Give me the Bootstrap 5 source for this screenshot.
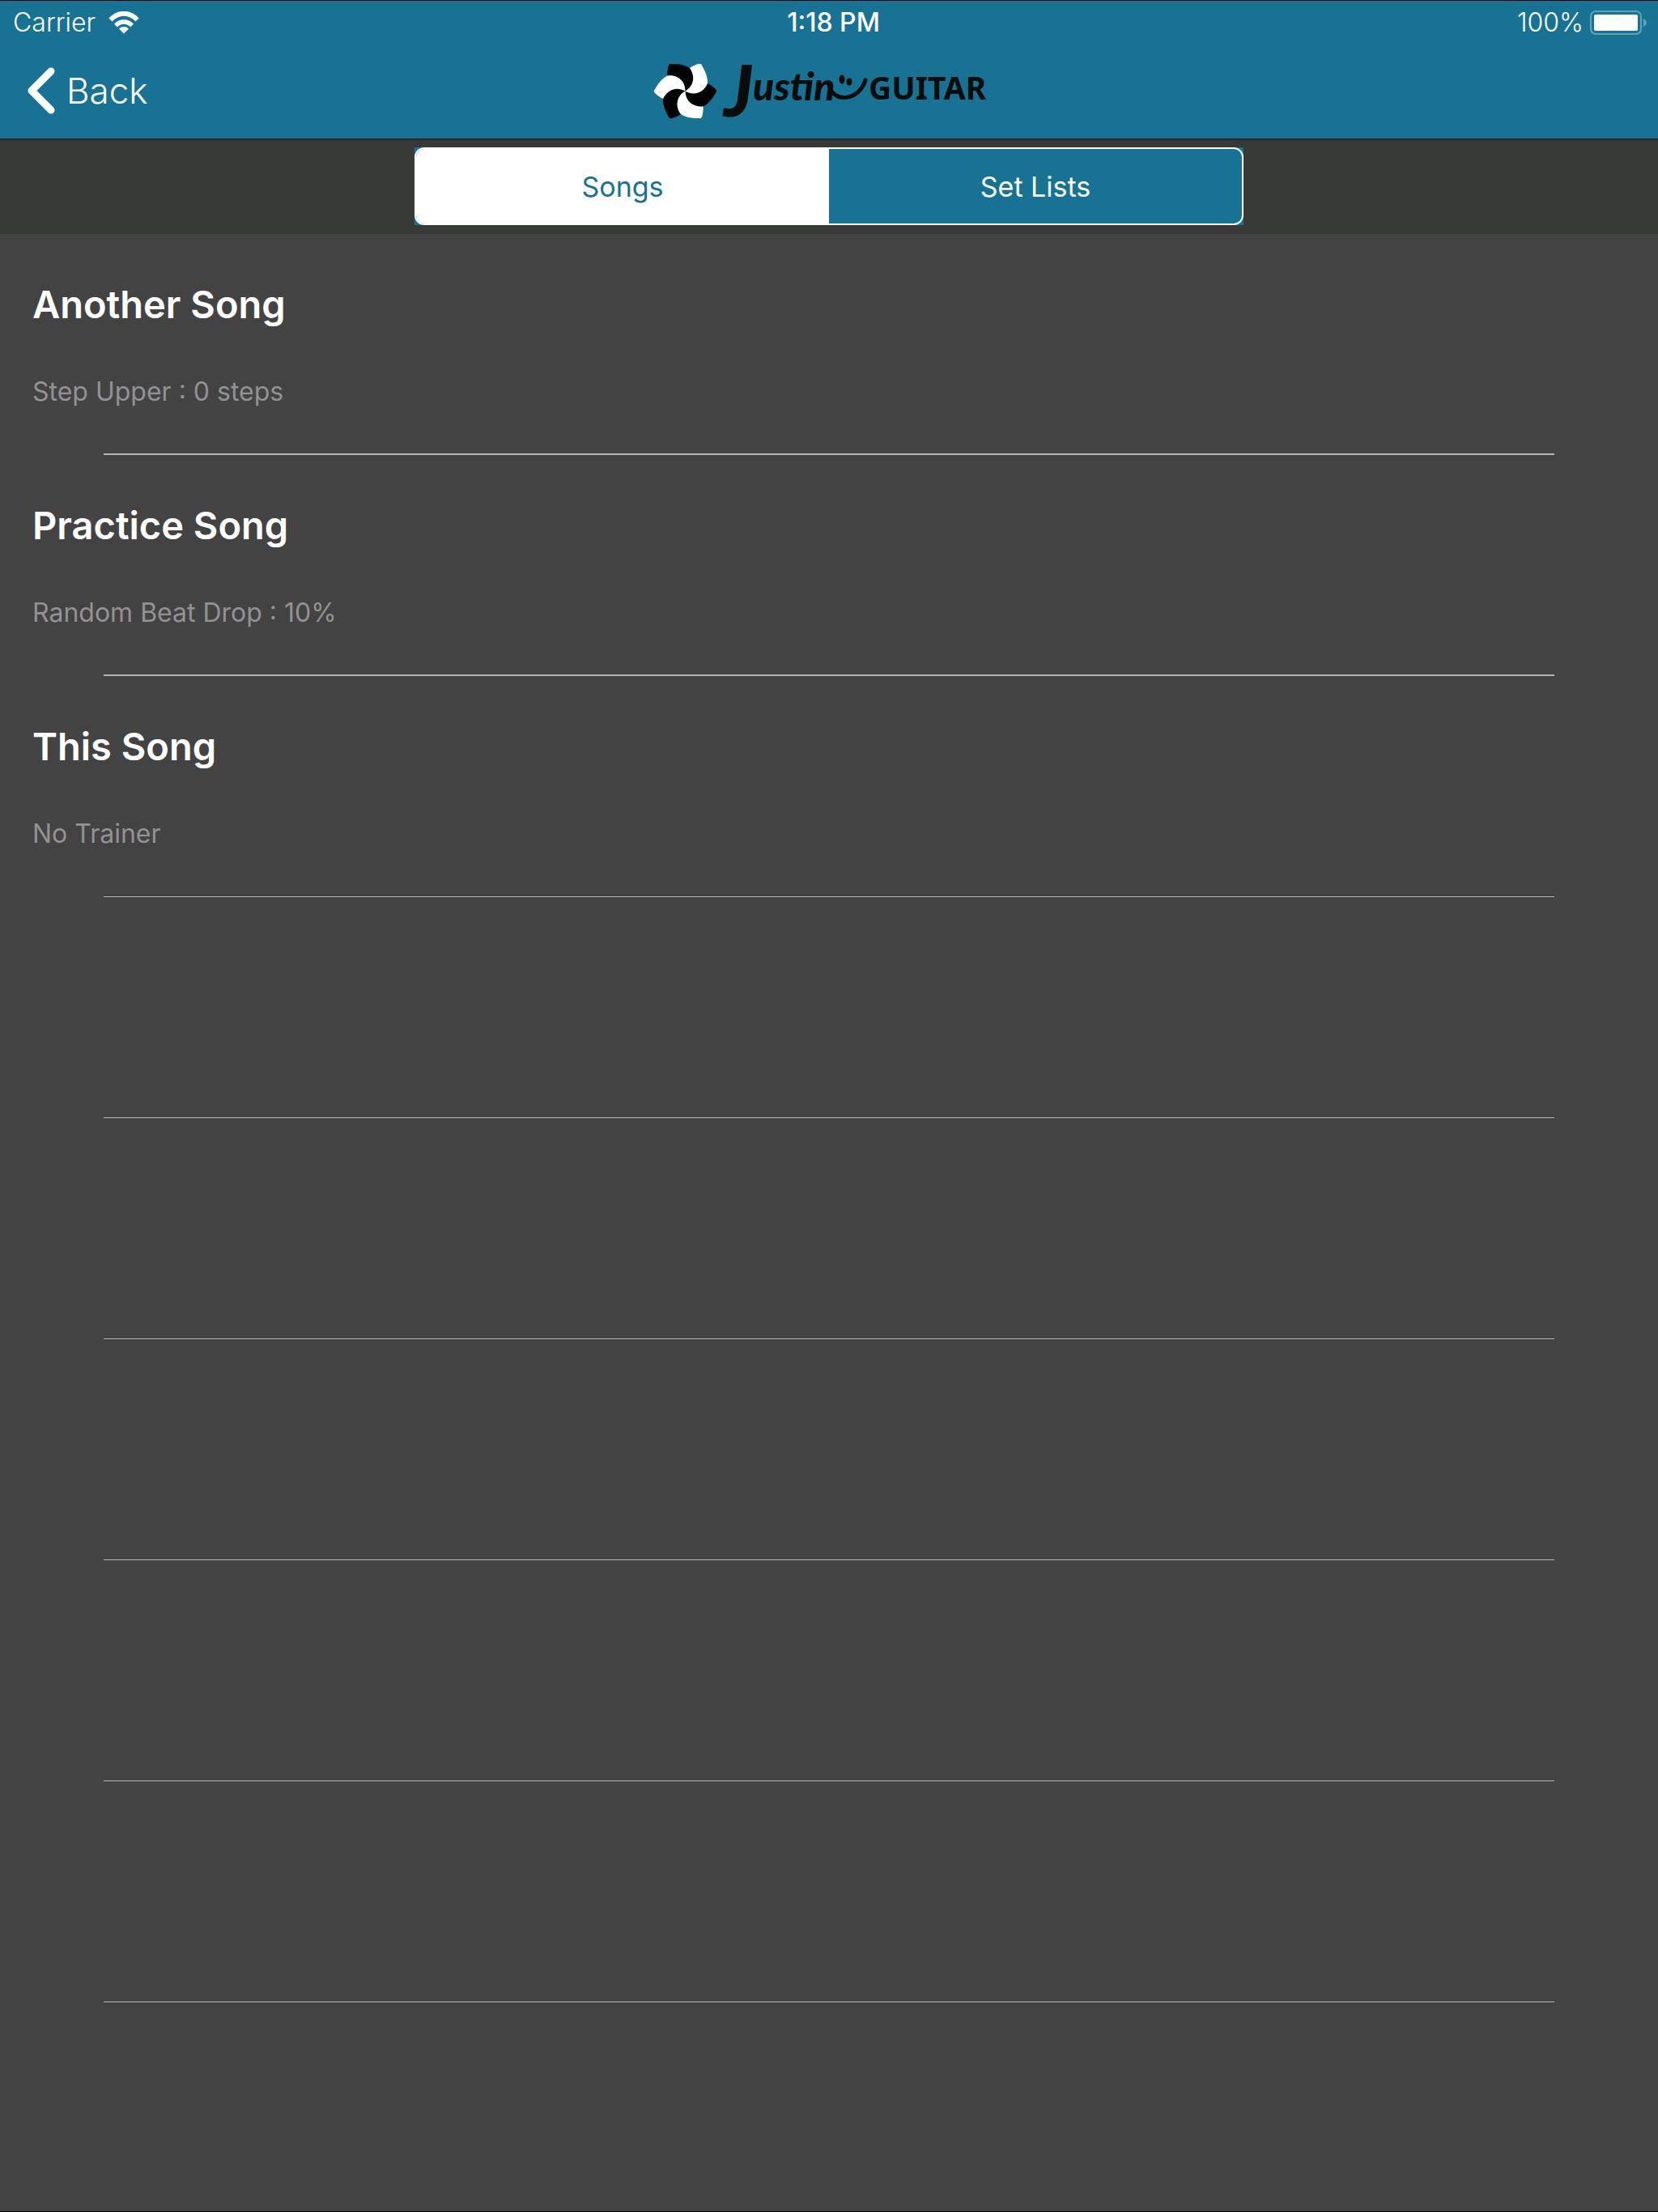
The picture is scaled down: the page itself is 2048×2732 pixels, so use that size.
<!DOCTYPE html>
<html lang="en">
<head>
<meta charset="utf-8">
<meta name="viewport" content="width=device-width, initial-scale=1">
<title>Songs</title>
<link href="https://cdn.jsdelivr.net/npm/bootstrap@5.3.0/dist/css/bootstrap.min.css" rel="stylesheet">
<style>
  :root { --brand: #177293; }
  body { font-family: Inter, "Liberation Sans", sans-serif; background: #434343; color: #fff; border-top: 1px solid #000; border-bottom: 1px solid #000; }
  .app-head { background: var(--brand); border-bottom: 2px solid #272926; }
  .status-bar { height: 54px; padding: 0 13px 0 16px; font-size: 32px; line-height: 54px; }
  .status-bar .side { flex: 1 1 0; font-weight: 300; }
  .status-time { font-weight: 500; padding-left: 8px; }
  .title-bar { height: 116px; padding: 3px 32px 0; }
  .title-bar .side { flex: 1 1 0; }
  .back-link { font-size: 44px; font-weight: 300; line-height: 60px; gap: 14px; }
  .seg-bar { background: #383a37; padding: 9px 0 11px; }
  .seg-box { background: var(--brand); width: 50%; }
  .seg-group { border: 2px solid #fff; border-radius: 12px; overflow: hidden; height: 96px; }
  .seg-group .btn { flex: 1 1 0; border: 0; border-radius: 0; font-size: 34px; color: #fff; font-weight: 400; }
  .seg-group .btn.active { background: #fff; color: var(--brand); }
  .song-row { min-height: 273px; padding-top: 57px; }
  .song-name { font-size: 47px; line-height: 60px; font-weight: 600; margin: 0 40px 58px; }
  .song-note { font-size: 32px; line-height: 40px; font-weight: 400; color: #929292; margin: 0 40px; }
  .song-line { height: 1px; margin: auto 128px 0; background: #b5b6ba; }
  .song-line.strong { height: 2px; }
</style>
</head>
<body class="min-vh-100">
<header class="app-head">
  <div class="status-bar d-flex align-items-center">
    <div class="side d-flex align-items-center gap-3">
      <span>Carrier</span>
      <svg width="38" height="28" viewBox="0 0 38 28" fill="none" stroke="#fff" aria-label="Wi-Fi">
        <path d="M2.5 10.5C12 .2 26 .2 35.500 10.500" stroke-width="6"/>
        <path d="M9 17.500C14.600 11.600 23.400 11.600 29 17.500" stroke-width="5.500"/>
        <path d="M13 21.500C16.500 18.200 21.500 18.200 25 21.500L19 27.500Z" fill="#fff" stroke="none"/>
      </svg>
    </div>
    <div class="status-time">1:18 PM</div>
    <div class="side d-flex align-items-center justify-content-end gap-2">
      <span>100%</span>
      <svg width="71" height="30" viewBox="0 0 71 30" aria-label="Battery full">
        <rect x="1" y="1" width="62" height="28" rx="6" fill="none" stroke="#5fa3b8" stroke-width="2"/>
        <rect x="5" y="5" width="54" height="20" rx="2" fill="#fff"/>
        <path d="M66 10C71 12 71 18 66 20Z" fill="#5fa3b8"/>
      </svg>
    </div>
  </div>
  <nav class="title-bar d-flex align-items-center" aria-label="Main">
    <div class="side">
      <a href="#" class="back-link d-inline-flex align-items-center text-white text-decoration-none">
        <svg width="36" height="58" viewBox="0 0 36 58" fill="none" stroke="#fff" stroke-width="9" stroke-linecap="round" stroke-linejoin="round"><path d="M31 5L7 29L31 53"/></svg>
        <span>Back</span>
      </a>
    </div>
    <svg width="434" height="120" viewBox="807 54 434 120" role="img" aria-label="Justin Guitar">
      <defs>
        <path id="petal" d="M113 6C102 26 88 46 66 57C32 62 0 40 0 0C34.600 20 69 2 82.400 -28.700C96 -22 108 -13 114 -5Q119 1 113 6Z"/>
      </defs>
      <g transform="translate(846.500 111.500) scale(.333)">
        <g fill="#000"><use href="#petal"/><use href="#petal" transform="rotate(120)"/><use href="#petal" transform="rotate(240)"/></g>
        <g fill="#fff"><use href="#petal" transform="rotate(60)"/><use href="#petal" transform="rotate(180)"/><use href="#petal" transform="rotate(300)"/></g>
      </g>
      <g fill="#0a0c0b">
        <text font-family="Lato, sans-serif" font-weight="900" font-style="italic"><tspan x="894" y="143" font-size="88">J</tspan><tspan x="930" y="123" font-size="48">ustin</tspan></text>
        <ellipse cx="1040" cy="97" rx="3.500" ry="5.500"/>
        <ellipse cx="1049" cy="100" rx="3.500" ry="4.500"/>
        <path d="M1024 104C1029 127 1061 124 1069 98" fill="none" stroke="#0a0c0b" stroke-width="5" stroke-linecap="round"/>
        <text x="1073" y="122" font-family="'Noto Sans', sans-serif" font-size="39" font-weight="700">GUITAR</text>
      </g>
    </svg>
    <div class="side"></div>
  </nav>
</header>
<div class="seg-bar d-flex justify-content-center">
  <div class="seg-box">
    <div class="seg-group d-flex" role="group" aria-label="View">
      <button type="button" class="btn active" aria-pressed="true">Songs</button>
      <button type="button" class="btn" aria-pressed="false">Set Lists</button>
    </div>
  </div>
</div>
<main>
  <ul class="list-unstyled m-0">
    <li class="song-row d-flex flex-column"><h2 class="song-name">Another Song</h2><p class="song-note">Step Upper : 0 steps</p><div class="song-line strong"></div></li>
    <li class="song-row d-flex flex-column"><h2 class="song-name">Practice Song</h2><p class="song-note">Random Beat Drop : 10%</p><div class="song-line strong"></div></li>
    <li class="song-row d-flex flex-column"><h2 class="song-name">This Song</h2><p class="song-note">No Trainer</p><div class="song-line"></div></li>
    <li class="song-row d-flex flex-column"><div class="song-line"></div></li>
    <li class="song-row d-flex flex-column"><div class="song-line"></div></li>
    <li class="song-row d-flex flex-column"><div class="song-line"></div></li>
    <li class="song-row d-flex flex-column"><div class="song-line"></div></li>
    <li class="song-row d-flex flex-column"><div class="song-line"></div></li>
  </ul>
</main>
<script src="https://cdn.jsdelivr.net/npm/bootstrap@5.3.0/dist/js/bootstrap.bundle.min.js"></script>
</body>
</html>
